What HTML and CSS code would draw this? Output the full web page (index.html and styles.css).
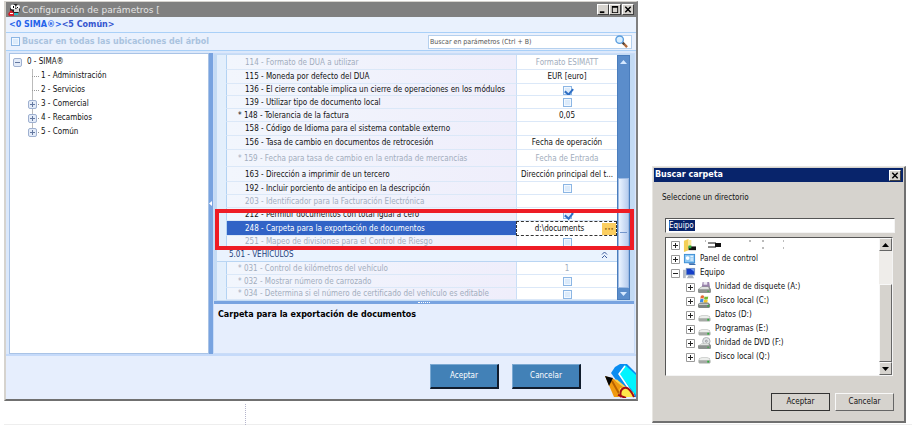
FILE: index.html
```html
<!DOCTYPE html>
<html lang="es">
<head>
<meta charset="utf-8">
<title>Configuración de parámetros</title>
<link rel="stylesheet" href="styles.css">
</head>
<body>
<svg class="defs" aria-hidden="true">
  <symbol id="plus" viewBox="0 0 9 9"><path d="M.5.5h8v8h-8z" fill="#fff" stroke="#9a9a9a"/><path d="M2 4.5h5M4.5 2v5" stroke="#222"/></symbol>
  <symbol id="minus" viewBox="0 0 9 9"><path d="M.5.5h8v8h-8z" fill="#fff" stroke="#9a9a9a"/><path d="M2 4.5h5" stroke="#222"/></symbol>
  <symbol id="bplus" viewBox="0 0 9 9"><rect x=".5" y=".5" width="8" height="8" rx="1.5" fill="#e3ebf8" stroke="#9fb0d0"/><path d="M2 4.5h5M4.5 2v5" stroke="#6478a0"/></symbol>
  <symbol id="bminus" viewBox="0 0 9 9"><rect x=".5" y=".5" width="8" height="8" rx="1.5" fill="#e3ebf8" stroke="#9fb0d0"/><path d="M2 4.5h5" stroke="#6478a0"/></symbol>
  <symbol id="drive" viewBox="0 0 14 14"><path d="M1 9q0-2 3-2h6q3 0 3 2l.5 1.500v2l-1 1h-11l-1-1V10z" fill="#a5a9a5"/><path d="M1.500 9q0-1.500 3-1.500h5q3 0 3 1.500v1h-11z" fill="#eceeec"/><path d="M10 10.500h2v2h-2z" fill="#2fae3c"/></symbol>
  <symbol id="floppy" viewBox="0 0 14 14"><path d="M5 1h7l1 6H4z" fill="#9a83ad"/><path d="M6 1h4v3H6z" fill="#ece8f2"/><path d="M1 8l3-2h8l2 3v3l-1 1H1l-1-1V9z" fill="#8d918f"/><path d="M1 8.500l3-2h7l1 2.500H1z" fill="#dfe2e0"/><path d="M10 10.500h2v1h-2z" fill="#2fae3c"/></symbol>
  <symbol id="windisk" viewBox="0 0 14 14"><path d="M3 1q2-1.500 3.500 0L6 4q-2-1-3.500 0z" fill="#e46832"/><path d="M7 1.500q2 1 4 0L10.500 4.500q-2 1-4 0z" fill="#74b82e"/><path d="M2.500 4.500q1.500-1 3.500 0L5.500 8q-2-1-3.500 0z" fill="#3d8be0"/><path d="M6.500 5q2 1 4 0L10 8q-2 1-4 0z" fill="#f4c52b"/><path d="M1 9l2-1h8l2 2v3l-1 1H1l-1-1v-3z" fill="#7f8582"/><path d="M1 9.500h10v1H1z" fill="#dce0dd"/><path d="M10 11h2v1.500h-2z" fill="#2fae3c"/></symbol>
  <symbol id="dvd" viewBox="0 0 14 14"><circle cx="9" cy="4.500" r="4" fill="#e2e4e6" stroke="#aaaeb2"/><circle cx="9" cy="4.500" r="1" fill="#fff" stroke="#8c9095"/><path d="M1 9l3-2h8l2 2v3l-1 1H1l-1-1V9z" fill="#8d918f"/><path d="M1 9l3-2h7l1 2H1z" fill="#e1e4e2"/><path d="M10 10.500h2v1h-2z" fill="#2fae3c"/></symbol>
  <symbol id="up" viewBox="0 0 7 4"><path d="M3.500 0L7 4H0z" fill="currentColor"/></symbol>
  <symbol id="down" viewBox="0 0 7 4"><path d="M3.500 4L7 0H0z" fill="currentColor"/></symbol>
</svg>

<div class="page">
<main class="window">
  <header class="titlebar">
    <svg class="appicon" viewBox="0 0 13 13"><circle cx="7" cy="6" r="5" fill="#222"/><circle cx="5" cy="4" r="2.500" fill="#fff"/><circle cx="10" cy="4" r="2" fill="#fff"/><path d="M5 3h1v2H5zM9 4h1v1H9z" fill="#000"/><path d="M6 6h5v3H6z" fill="#d8d8d8"/><path d="M0 11l3-4 3 3v3H1z" fill="#d5202b"/><path d="M2 10h3v1H2z" fill="#fff"/><path d="M6 10h4v2H6z" fill="#29b8c5"/></svg>
    <h1>Configuración de parámetros [</h1>
    <div class="winbtns">
      <button aria-label="Minimizar"><svg viewBox="0 0 11 10"><path d="M2 7h5v2H2z"/></svg></button>
      <button aria-label="Maximizar"><svg viewBox="0 0 11 10"><path d="M2 1h7v8H2zM3 3v5h5V3z" fill-rule="evenodd"/></svg></button>
      <button aria-label="Cerrar"><svg viewBox="0 0 11 10"><path d="M2.500 2l6 6M8.500 2l-6 6" stroke="#000" stroke-width="1.600"/></svg></button>
    </div>
  </header>
  <nav class="crumbs"><a href="#"><b>&lt;0 SIMA®&gt;</b></a><a href="#">&lt;5 Común&gt;</a></nav>
  <div class="searchrow">
    <label class="searchall"><input type="checkbox" class="check">Buscar en todas las ubicaciones del árbol</label>
    <div class="search">
      <input type="text" aria-label="Buscar en parámetros" placeholder="Buscar en parámetros (Ctrl + B)">
      <svg viewBox="0 0 14 14"><path d="M8 8l5 5" stroke="#b06a3c" stroke-width="2.500"/><path d="M7 7l3 3" stroke="#444" stroke-width="2"/><circle cx="5" cy="5" r="4" fill="#d9efff" stroke="#5b9ee0" stroke-width="1.500"/></svg>
    </div>
  </div>
  <div class="panes">
    <ul class="tree">
      <li><svg class="ex"><use href="#bminus"/></svg><span>0 - SIMA®</span>
        <ul>
          <li><i></i><span>1 - Administración</span></li>
          <li><i></i><span>2 - Servicios</span></li>
          <li><svg class="ex"><use href="#bplus"/></svg><i></i><span>3 - Comercial</span></li>
          <li><svg class="ex"><use href="#bplus"/></svg><i></i><span>4 - Recambios</span></li>
          <li><svg class="ex"><use href="#bplus"/></svg><i></i><span>5 - Común</span></li>
        </ul>
      </li>
    </ul>
    <div class="vsplit"><svg viewBox="0 0 3 5"><path d="M3 0v5L0 2.500z" fill="#fff"/></svg></div>
    <section class="detail">
      <div class="gridbox">
        <table class="params">
          <colgroup><col class="cgut"><col><col class="cval"></colgroup>
          <tbody>
          <tr class="tall off"><td></td><td id="p114">114 - Formato de DUA a utilizar</td><td>Formato ESIMATT</td></tr>
          <tr class="mid"><td></td><td id="p115">115 - Moneda por defecto del DUA</td><td>EUR [euro]</td></tr>
          <tr class="low"><td></td><td id="p136">136 - El cierre contable implica un cierre de operaciones en los módulos</td><td><input type="checkbox" class="check" aria-labelledby="p136" checked></td></tr>
          <tr><td></td><td id="p139">139 - Utilizar tipo de documento local</td><td><input type="checkbox" class="check" aria-labelledby="p139"></td></tr>
          <tr><td></td><td id="p148" class="star">148 - Tolerancia de la factura</td><td>0,05</td></tr>
          <tr class="mid"><td></td><td id="p158">158 - Código de Idioma para el sistema contable externo</td><td></td></tr>
          <tr class="mid"><td></td><td id="p156">156 - Tasa de cambio en documentos de retrocesión</td><td>Fecha de operación</td></tr>
          <tr class="xtall off"><td></td><td id="p159" class="star">159 - Fecha para tasa de cambio en la entrada de mercancías</td><td>Fecha de Entrada</td></tr>
          <tr class="tall"><td></td><td id="p163">163 - Dirección a imprimir de un tercero</td><td>Dirección principal del t...</td></tr>
          <tr><td></td><td id="p192">192 - Incluir porciento de anticipo en la descripción</td><td><input type="checkbox" class="check" aria-labelledby="p192"></td></tr>
          <tr class="off"><td></td><td id="p203">203 - Identificador para la Facturación Electrónica</td><td></td></tr>
          <tr><td></td><td id="p212">212 - Permitir documentos con total igual a cero</td><td><input type="checkbox" class="check" aria-labelledby="p212" checked></td></tr>
          <tr class="tall sel"><td></td><td id="p248">248 - Carpeta para la exportación de documentos</td><td><div class="edit"><input type="text" aria-labelledby="p248" value="d:\documents"><button aria-label="Examinar">•••</button></div></td></tr>
          <tr class="low off"><td></td><td id="p251">251 - Mapeo de divisiones para el Control de Riesgo</td><td><input type="checkbox" class="check" aria-labelledby="p251"></td></tr>
          <tr class="mid group"><th colspan="3"><div><span>5.01 - VEHÍCULOS</span><svg viewBox="0 0 7 8"><path d="M1 3.500L3.500 1 6 3.500M1 7l2.500-2.500L6 7" fill="none" stroke="#3a5a9c"/></svg></div></th></tr>
          <tr class="off"><td></td><td id="p031" class="star">031 - Control de kilómetros del vehículo</td><td>1</td></tr>
          <tr class="off"><td></td><td id="p032" class="star">032 - Mostrar número de carrozado</td><td><input type="checkbox" class="check" aria-labelledby="p032"></td></tr>
          <tr class="low off"><td></td><td id="p034" class="star">034 - Determina si el número de certificado del vehículo es editable</td><td><input type="checkbox" class="check" aria-labelledby="p034"></td></tr>
          </tbody>
        </table>
        <div class="bluescroll">
          <button aria-label="Subir"><svg><use href="#up"/></svg></button>
          <div class="track"><div class="thumb"></div></div>
          <button aria-label="Bajar"><svg><use href="#down"/></svg></button>
        </div>
        <div class="highlight"></div>
      </div>
      <div class="hsplit"><i></i></div>
      <h2>Carpeta para la exportación de documentos</h2>
    </section>
  </div>
  <footer class="actions">
    <button>Aceptar</button>
    <button>Cancelar</button>
    <svg class="pencil" viewBox="0 0 31 34"><path d="M6 9l4-6 5-3h7l9 9v24H23z" fill="#0a8cf0"/><path d="M14 10l6-9 11 10v20z" fill="#00f4ff"/><path d="M20 2l-6 8 15 22" fill="none" stroke="#fff" stroke-width="1.500"/><path d="M0 12l9 3 20 18H9z" fill="#f09a10"/><path d="M7 17l9 16" stroke="#b86200" stroke-width="2"/><path d="M11 16l12 10" stroke="#ffd24a" stroke-width="2"/><path d="M0 12l8 2-4 8z" fill="#050505"/><path d="M15 24l6-1 8 6v4H13z" fill="#ffe84a"/><path d="M16 33q-2-7 3-9t10 9M13 31l8 3" fill="none" stroke="#a50d12" stroke-width="2"/></svg>
  </footer>
</main>

<aside class="dialog">
  <header><h2>Buscar carpeta</h2><button aria-label="Cerrar"><svg viewBox="0 0 11 10"><path d="M2.500 2l6 6M8.500 2l-6 6" stroke="#000" stroke-width="1.600"/></svg></button></header>
  <div class="dbody">
    <label for="folder">Seleccione un directorio</label>
    <div class="field"><mark><input id="folder" type="text" value="Equipo"></mark></div>
    <div class="list">
      <ul>
        <li><svg class="ex"><use href="#plus"/></svg><svg class="ic" viewBox="0 0 14 14"><path d="M1 2l5-2v12l-5 2z" fill="#f3cf55"/><path d="M6 1h3v9l-3 2z" fill="#fbe79a"/><path d="M6 8h8v4H6z" fill="#111"/><path d="M6 7h3v3H6z" fill="#2fae3c"/></svg><svg class="scrap" viewBox="0 0 84 12"><path d="M5 2h1M50 1v2M63 1v2M63 8v2M84 1v2M84 8v2" stroke="#777"/><path d="M8 4h8v4H8" fill="none" stroke="#111"/><path d="M15 4h6v4h-6z" fill="#111"/></svg></li>
        <li><svg class="ex"><use href="#plus"/></svg><svg class="ic" viewBox="0 0 14 14"><path d="M1 1h12v10H1z" fill="#3d8fd6"/><path d="M2 2h10v8H2z" fill="#8cc6f2"/><circle cx="5" cy="5.500" r="2" fill="#fff"/><path d="M8 3h3v1H8zM8 5h3v1H8zM8 7h3v1H8z" fill="#fff"/><path d="M6 11h6l2 2H7z" fill="#3d6fae"/></svg><span>Panel de control</span></li>
        <li><svg class="ex"><use href="#minus"/></svg><svg class="ic" viewBox="0 0 14 14"><path d="M0 3h3v9H0z" fill="#b3bac5"/><path d="M3 1h10v8H3z" fill="#7f9ac0"/><path d="M4 2h8v6H4z" fill="#163fc8"/><path d="M8 2h4v3z" fill="#6f9cf5"/><path d="M6 9h4l2 3H4z" fill="#a9b2bf"/></svg><span>Equipo</span>
          <ul>
            <li><svg class="ex"><use href="#plus"/></svg><svg class="ic"><use href="#floppy"/></svg><span>Unidad de disquete (A:)</span></li>
            <li><svg class="ex"><use href="#plus"/></svg><svg class="ic"><use href="#windisk"/></svg><span>Disco local (C:)</span></li>
            <li><svg class="ex"><use href="#plus"/></svg><svg class="ic"><use href="#drive"/></svg><span>Datos (D:)</span></li>
            <li><svg class="ex"><use href="#plus"/></svg><svg class="ic"><use href="#drive"/></svg><span>Programas (E:)</span></li>
            <li><svg class="ex"><use href="#plus"/></svg><svg class="ic"><use href="#dvd"/></svg><span>Unidad de DVD (F:)</span></li>
            <li><svg class="ex"><use href="#plus"/></svg><svg class="ic"><use href="#drive"/></svg><span>Disco local (Q:)</span></li>
          </ul>
        </li>
      </ul>
      <div class="grayscroll">
        <button aria-label="Subir"><svg><use href="#up"/></svg></button>
        <div class="track"><div class="thumb"></div></div>
        <button aria-label="Bajar"><svg><use href="#down"/></svg></button>
      </div>
    </div>
    <div class="dactions"><button class="default">Aceptar</button><button>Cancelar</button></div>
  </div>
</aside>
</div>
<div class="base"></div>
</body>
</html>
```
FILE: styles.css
```css
* { box-sizing: border-box; }
body {
  margin: 0;
  background: #fff;
  color: #111;
  font: 8px/10px "DejaVu Sans Condensed", "DejaVu Sans", sans-serif;
}
button, input { font: inherit; color: inherit; margin: 0; padding: 0; border: 0; border-radius: 0; }
ul { list-style: none; margin: 0; padding: 0; }
h1, h2 { margin: 0; font-size: 9px; line-height: 12px; }
svg { display: block; flex: none; }
.defs { position: absolute; width: 0; height: 0; }

.page { display: flex; align-items: flex-end; gap: 14px; padding: 1px 6px 0 4px; }

/* main window */
.window {
  flex: 1;
  min-width: 0;
  align-self: flex-start;
  background: #e6eefd;
  border: 2px solid #d6d3ce;
  border-top-width: 1px;
  border-right-color: #808080;
  border-bottom-color: #707070;
}
.titlebar { display: flex; align-items: center; height: 15px; padding: 0 2px; background: #808080; color: #e4e4e4; }
.titlebar h1 { flex: 1; font: 9px/12px "DejaVu Sans", sans-serif; }
.appicon { width: 13px; height: 13px; margin-right: 1px; }
.winbtns { display: flex; }
.winbtns button, .dialog header button {
  width: 12px;
  height: 11px;
  background: #d6d3ce;
  border: 1px solid #fff;
  border-right-color: #404040;
  border-bottom-color: #404040;
}
.winbtns button:last-child { margin-left: 1px; }
.winbtns svg, .dialog header svg { width: 10px; height: 9px; }
.crumbs { display: flex; height: 16px; align-items: center; padding: 0 3px; background: #e9f1fd; border-bottom: 1px solid #a9d0f8; }
.crumbs a { color: #3355cf; text-decoration: none; font: bold 8px/10px "DejaVu Sans", sans-serif; }
.crumbs b { color: #2463ea; }
.searchrow { display: flex; justify-content: space-between; align-items: center; height: 18px; padding: 0 4px 0 5px; background: #eaf1fd; border-bottom: 1px solid #a9d0f8; }
.searchall { display: flex; align-items: center; gap: 2px; color: #a9c3df; font: bold 8px/10px "DejaVu Sans", sans-serif; }
.search { display: flex; align-items: center; width: 204px; height: 14px; padding: 0 3px 0 1px; background: #fff; border: 1px solid #b5d0ee; }
.search input { flex: 1; min-width: 0; height: 10px; background: none; font-size: 7px; }
.search input::placeholder { color: #555; opacity: 1; }
.search svg { width: 13px; height: 13px; }

.check {
  appearance: none;
  width: 9px;
  height: 9px;
  flex: none;
  display: block;
  background: #dcebfb;
  border: 1px solid #8cb6e4;
  box-shadow: inset 0 0 0 1px #f2f8ff;
}
.check:checked::after { content: ""; display: block; width: 4px; height: 6px; margin: 0 2px; border: solid #2f6fc4; border-width: 0 2px 2px 0; transform: rotate(40deg); }

.panes { display: flex; padding: 2px 1px 0 3px; border-bottom: 2px solid #c5dafa; background: #dbe8fb; }
.tree { width: 200px; background: #fff; border: 1px solid #a9c3e6; padding: 1px 3px; }
.tree li { position: relative; }
.tree > li { padding-left: 14px; }
.tree span { display: block; line-height: 14px; }
.tree > li > .ex { position: absolute; left: 0; top: 3px; }
.tree ul { margin-left: -1px; background: linear-gradient(#bbb, #bbb) 6px 0 / 1px 63px no-repeat; }
.tree ul li { display: flex; align-items: center; padding-left: 6px; }
.tree ul i { width: 7px; margin-right: 2px; border-top: 1px dotted #999; }
.tree ul .ex { position: absolute; left: 2px; top: 3px; }
.ex { width: 9px; height: 9px; }
.vsplit { display: flex; align-items: center; width: 4px; background: #78a3e0; }
.vsplit svg { width: 3px; height: 5px; }
.detail { flex: 1; min-width: 0; background: #e6eefd; border: 1px solid #c9dcf8; }
.detail > h2 { height: 49px; padding: 5px 4px; font: bold 8px/12px "DejaVu Sans", sans-serif; color: #000; }
.hsplit { display: flex; justify-content: center; align-items: center; height: 3px; background: #78a3e0; }
.hsplit i { width: 12px; border-top: 1px dotted #fff; }
.gridbox { position: relative; display: flex; padding: 1px 4px 1px 3px; background: #c4dbf4; }

.params { flex: 1; width: 100%; border-collapse: separate; border-spacing: 0; table-layout: fixed; background: #f1f4fc; min-width: 0; }
.cgut { width: 10px; }
.cval { width: 101px; }
.params tr { height: 13px; }
.params .low { height: 12px; }
.params .mid { height: 14px; }
.params .tall { height: 15px; }
.params .xtall { height: 17px; }
.params td { padding: 1px 0 0; line-height: 10px; white-space: nowrap; overflow: hidden; border-bottom: 1px solid #dbe8f8; }
.params td:first-child { background: #e3effc; border-right: 1px solid #b3d3f3; border-bottom-color: #e3effc; }
.params td:nth-child(2) { padding-left: 18px; background: linear-gradient(90deg, #f2f6fd, #efeefb); }
.params td:nth-child(3) { background: #fff; border-left: 1px solid #cbdff6; text-align: center; }
.params td.star { padding-left: 11px; }
.star::before { content: "* "; }
.params .off { color: #a2adbd; }
.params td .check { margin: 0 auto; }
.params .sel td:nth-child(2) { background: #3163c6; color: #fff; }
.params .sel td:nth-child(3) { padding: 0; border: 1px dashed #333; }
.edit { display: flex; height: 12px; }
.edit input { flex: 1; min-width: 0; text-align: center; background: none; }
.edit button { width: 14px; background: #fbce60; color: #8a5a10; font-size: 6px; line-height: 10px; }
.group th { padding: 0 7px 0 12px; font-weight: normal; text-align: left; color: #1f3f7c; background: #eaf3fe; border-bottom: 1px solid #b9d5f3; }
.group div { display: flex; justify-content: space-between; align-items: center; padding-right: 2px; }
.group svg { width: 7px; height: 8px; }

.bluescroll { flex: none; display: flex; flex-direction: column; width: 13px; background: #5b8dcb; border: 1px solid #4a7dbd; color: #d5e8ff; }
.bluescroll button { display: grid; place-items: center; height: 11px; background: #5b8dcb; }
.bluescroll svg, .grayscroll svg { width: 7px; height: 4px; }
.track { flex: 1; display: flex; flex-direction: column; justify-content: flex-end; }
.bluescroll .thumb { height: 50%; background: linear-gradient(#7396cc, #7396cc) center / 7px 1px no-repeat, linear-gradient(90deg, #eaf3ff, #b8cdee); border: 1px solid #9ebbe3; }
.highlight { position: absolute; left: 1px; right: 0; top: 155px; height: 41px; border: 4px solid #ee1c25; pointer-events: none; }

.actions { display: flex; justify-content: flex-end; align-items: flex-start; gap: 13px; height: 43px; padding-top: 8px; }
.actions button { width: 69px; height: 25px; background: #4281b7; color: #fff; border: 1px solid #7ba9d2; border-right: 2px solid #111c2c; border-bottom: 2px solid #111c2c; font: 8px/10px "DejaVu Sans Condensed", sans-serif; }
.pencil { width: 31px; height: 34px; margin-left: 11px; }

/* folder dialog */
.dialog {
  width: 254px;
  margin-top: 165px;
  padding: 1px;
  background: #d6d3ce;
  border: 1px solid #e8e6e2;
  border-right: 2px solid #707070;
  border-bottom: 2px solid #707070;
}
.dialog header { display: flex; align-items: center; justify-content: space-between; height: 14px; padding: 0 2px 0 1px; background: #08246b; color: #fff; }
.dialog header h2 { font: bold 8px/12px "DejaVu Sans", sans-serif; }
.dialog header button { width: 12px; height: 11px; }
.dbody { padding: 10px 8px 9px; }
.dbody label { display: block; line-height: 12px; }
.field { height: 15px; margin: 14px 0 0 3px; padding: 1px 3px; background: #fff; border: 1px solid #555; border-right-color: #f4f4f4; border-bottom-color: #f4f4f4; }
.field mark { display: flex; width: 26px; background: #08246b; color: #fff; }
.field input { width: 100%; height: 11px; background: none; }
.list { display: flex; justify-content: space-between; height: 139px; margin: 4px 2px 0 3px; background: #fff; border: 1px solid #555; border-right-color: #f4f4f4; border-bottom-color: #f4f4f4; }
.list li { display: grid; grid-template-columns: 9px 14px auto; align-items: center; column-gap: 3px; min-height: 14px; }
.list > ul { padding-left: 5px; }
.list li ul { grid-column: 1 / -1; padding-left: 15px; }
.list span { line-height: 14px; }
.ic { width: 13px; height: 13px; }
.scrap { width: 84px; height: 12px; }
.grayscroll { display: flex; flex-direction: column; width: 13px; background: #efedea; color: #000; }
.grayscroll button { display: grid; place-items: center; height: 13px; }
.grayscroll button, .grayscroll .thumb, .dactions button { background: #d6d3ce; border: 1px solid #f8f8f8; border-right-color: #666; border-bottom-color: #666; }
.grayscroll .thumb { height: 70%; }
.dactions { display: flex; justify-content: flex-end; gap: 5px; margin-top: 17px; padding-right: 1px; }
.dactions button { width: 59px; height: 18px; }
.dactions .default { outline: 1px solid #333; outline-offset: -1px; border-color: #333; }

/* page rule and the dotted guide above it */
.base { height: 2px; margin-left: 4px; border-bottom: 1px solid #eee; }
.base::before { content: ""; position: absolute; left: 245px; top: 404px; height: 21px; border-left: 1px dotted #b5b5cc; }
```
